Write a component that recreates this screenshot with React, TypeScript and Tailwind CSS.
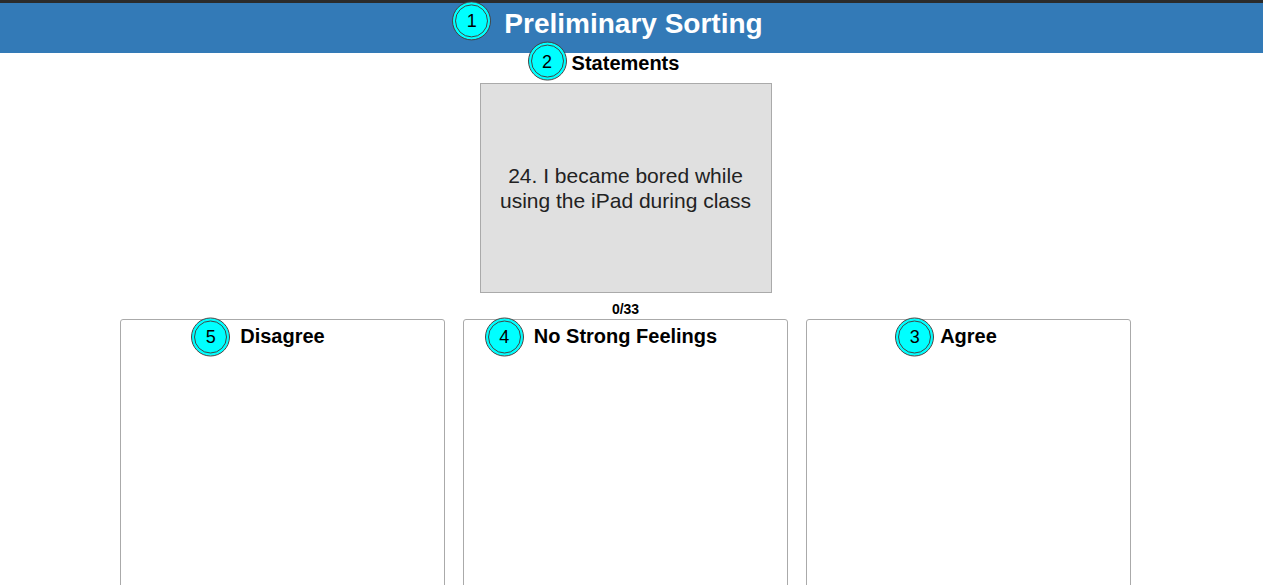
import React from "react";

function Badge({ n, className = "" }: { n: number; className?: string }) {
  return (
    <span
      className={
        "absolute flex h-[39px] w-[39px] items-center justify-center rounded-full border-[4px] border-double border-[#444] bg-[#00ffff] text-[18px] font-normal leading-none text-black " +
        className
      }
    >
      {n}
    </span>
  );
}

function Column({ label, n, gap }: { label: string; n: number; gap: string }) {
  return (
    <div className="h-[300px] rounded-t-[3px] border border-[#aaa] bg-white">
      <div className="flex justify-center pt-[5px]">
        <span className="relative text-[20px] font-bold leading-[23px] text-black">
          <Badge n={n} className={"right-full top-1/2 -translate-y-1/2 " + gap} />
          {label}
        </span>
      </div>
    </div>
  );
}

export default function App() {
  return (
    <div
      className="h-[585px] w-full overflow-hidden bg-white"
      style={{ fontFamily: '"Liberation Sans", Arial, sans-serif' }}
    >
      <div className="h-[3px] bg-[#2b2b2b]" />
      <div className="flex h-[50px] items-center justify-center bg-[#337ab7] pb-[8px] pl-[4px]">
        <span className="relative text-[28px] font-bold leading-none text-white">
          <Badge n={1} className="right-full top-1/2 mr-[13px] -translate-y-[58%]" />
          Preliminary Sorting
        </span>
      </div>
      <div className="flex flex-col items-center pr-[12px]">
        <div className="mt-0 flex h-[20px] items-center">
          <span className="relative text-[20px] font-bold leading-none text-black">
            <Badge n={2} className="right-full top-1/2 mr-[5px] -translate-y-[55%]" />
            Statements
          </span>
        </div>
        <div className="mt-[10px] flex h-[210px] w-[292px] items-center justify-center border border-[#aaa] bg-[#e0e0e0] px-2 text-center text-[21px] leading-[25px] text-[#222]">
          24. I became bored while using the iPad during class
        </div>
        <div className="mt-[8px] text-[14px] font-bold leading-[16px] text-black">0/33</div>
      </div>
      <div className="mt-[2px] grid grid-cols-[325px_325px_325px] gap-[18px] pl-[120px]">
        <Column label="Disagree" n={5} gap="mr-[10px]" />
        <Column label="No Strong Feelings" n={4} gap="mr-[10px]" />
        <Column label="Agree" n={3} gap="mr-[6px]" />
      </div>
    </div>
  );
}
